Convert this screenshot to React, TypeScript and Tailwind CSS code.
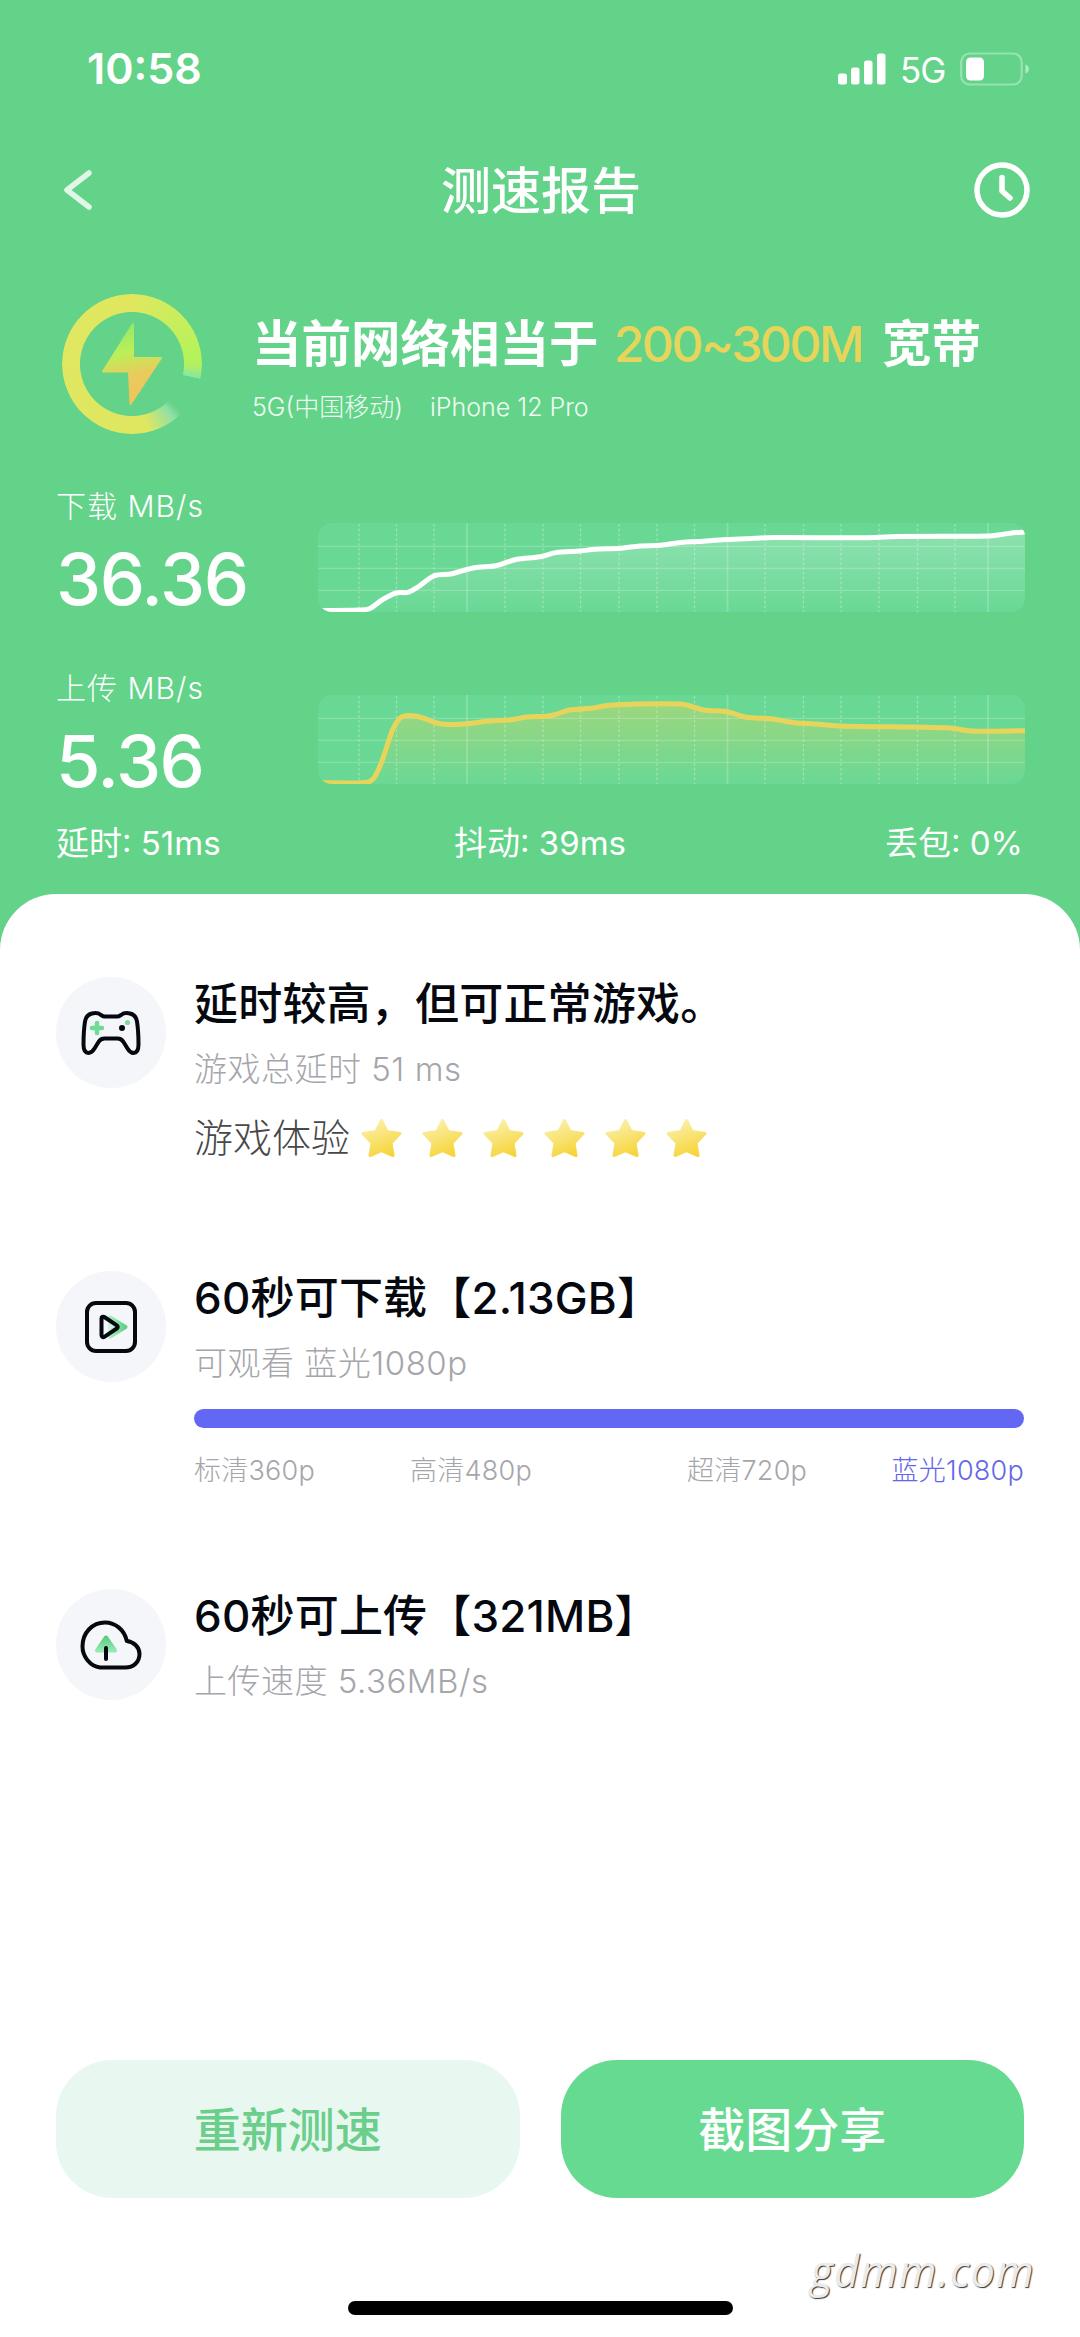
import type { ReactNode } from "react";

type Point = [number, number];

const downloadPoints: Point[] = [
  [2, 87.5], [40, 87], [52, 85.5], [64, 77], [78, 70], [90, 69.3], [100, 64], [116, 52.8],
  [133, 51], [149, 46.5], [160, 44.3], [178, 42.8], [198, 36.5], [222, 33.8], [237.5, 29.6],
  [262.5, 28], [277, 26.2], [303, 25.2], [322, 23], [342.5, 22.3], [363, 19.5], [380, 18.5],
  [408, 16.5], [428.5, 15.7], [456, 14.5], [542, 14.8], [580, 13.5], [669.5, 13],
  [683.5, 11.5], [697, 9.6], [708, 9],
];

const uploadPoints: Point[] = [
  [2, 87.5], [48, 87.5], [56, 83], [64, 66], [74.5, 35], [81.5, 23.5], [88, 20.7], [98.5, 21.3],
  [109, 24.5], [121, 28.5], [136.5, 29.5], [149, 28.8], [171, 26], [191.5, 25], [209, 22],
  [229, 21.2], [237.5, 19.5], [251, 15], [273.5, 13.3], [294, 10], [363, 9], [373.5, 11.3],
  [385.5, 15], [408, 16.5], [428.5, 22.3], [452.5, 23.8], [477, 27.7], [497, 28.9], [521.5, 31],
  [632, 33], [653, 36], [708, 35.7],
];

const dashedLines = [41, 78.5, 116, 187, 225, 262.5, 301, 339, 376.5, 447, 485.5, 523, 561, 599.5, 637];
const solidLines = [149, 409.5, 670];

function smoothPath(points: Point[]) {
  let d = `M${points[0][0]} ${points[0][1]}`;
  for (let i = 0; i < points.length - 1; i++) {
    const p0 = points[i - 1] || points[i];
    const p1 = points[i];
    const p2 = points[i + 1];
    const p3 = points[i + 2] || p2;
    const dx = (p2[0] - p1[0]) / 3;
    const m1 = (p2[1] - p0[1]) / (p2[0] - p0[0]);
    const m2 = (p3[1] - p1[1]) / (p3[0] - p1[0]);
    d += `C${p1[0] + dx} ${p1[1] + m1 * dx} ${p2[0] - dx} ${p2[1] - m2 * dx} ${p2[0]} ${p2[1]}`;
  }
  return d;
}

interface SpeedChartProps {
  id: string;
  points: Point[];
  color: string;
  fillOpacity: number;
}

function SpeedChart({ id, points, color, fillOpacity }: SpeedChartProps) {
  const line = smoothPath(points);
  return (
    <svg width="707" height="89" viewBox="0 0 707 89" className="rounded-[14px] bg-[#6ad895]">
      <defs>
        <linearGradient id={id} x1="0" y1="0" x2="0" y2="1">
          <stop offset="0" stopColor={color} stopOpacity={fillOpacity} />
          <stop offset="1" stopColor={color} stopOpacity="0" />
        </linearGradient>
      </defs>
      <path d={`${line}V89H2Z`} fill={`url(#${id})`} />
      <g stroke="#fff" strokeOpacity="0.2" strokeWidth="1.3">
        {[23.3, 45.3, 67.3].map((y) => (
          <path key={y} d={`M0 ${y}H707`} />
        ))}
        {solidLines.map((x) => (
          <path key={x} d={`M${x} 0V89`} strokeWidth="1.8" />
        ))}
        {dashedLines.map((x) => (
          <path key={x} d={`M${x} 1V89`} strokeOpacity="0.3" strokeDasharray="2.6 2.2" />
        ))}
      </g>
      <path d={line} fill="none" stroke={color} strokeWidth="5" />
    </svg>
  );
}

interface SpeedRowProps extends SpeedChartProps {
  label: string;
  value: string;
  chartClass: string;
}

function SpeedRow({ label, value, chartClass, ...chart }: SpeedRowProps) {
  return (
    <div className="flex justify-between">
      <div className="flex flex-col gap-[13px]">
        <div className="h-10 text-[30px] leading-10 font-light tracking-[1px] whitespace-nowrap">{label}</div>
        <div className="h-20 text-[72px] leading-[80px] font-medium tracking-[-1.4px]">{value}</div>
      </div>
      <div className={chartClass}>
        <SpeedChart {...chart} />
      </div>
    </div>
  );
}

interface ReportItemProps {
  icon: ReactNode;
  title: string;
  subtitle: string;
  children?: ReactNode;
}

function ReportItem({ icon, title, subtitle, children }: ReportItemProps) {
  return (
    <div className="flex gap-7">
      <div className="flex h-[111px] w-[110px] shrink-0 items-center justify-center rounded-full bg-[#f5f6f9]">
        {icon}
      </div>
      <div className="flex-1">
        <h2 className="h-[52px] text-[44px] leading-[54px] font-medium tracking-[0.2px] whitespace-nowrap text-[#05090f]">
          {title}
        </h2>
        <p className="mt-5 h-10 text-[33px] leading-10 font-light tracking-[0.5px] whitespace-nowrap text-[#a5a6ab]">
          {subtitle}
        </p>
        {children}
      </div>
    </div>
  );
}

function Star() {
  return (
    <svg width="41" height="40" viewBox="0 0 41 40">
      <defs>
        <linearGradient id="star" x1="0.2" y1="0" x2="0.6" y2="1">
          <stop offset="0" stopColor="#fbf1ae" />
          <stop offset="1" stopColor="#f6d53c" />
        </linearGradient>
      </defs>
      <path
        d="M20.5 2.5 26 13.5 39 15.5 30 25 32 37.5 20.5 32.5 9 37.5 11 25 2 15.5 15 13.5Z"
        fill="url(#star)"
        stroke="url(#star)"
        strokeWidth="3"
        strokeLinejoin="round"
      />
    </svg>
  );
}

function GamepadIcon() {
  return (
    <svg width="60" height="46" viewBox="0 0 60 46" fill="none">
      <path
        d="M11 3.500c3.500-.8 6.500-.5 9 1.500 1.500 1 2.500 1.500 4 1.500h12c1.500 0 2.500-.5 4-1.500 2.500-2 5.500-2.300 9-1.500 4.500 1 6.200 3.500 7 8 1 6.500 1.500 14 1.500 23 0 5-1.500 8.500-5 8.500-3 0-4.500-2-6-4.500l-4-6.500c-1.500-2.500-3.500-3.500-6-3.500h-13c-2.500 0-4.500 1-6 3.500l-4 6.500c-1.500 2.500-3 4.500-6 4.500-3.500 0-5-3.500-5-8.500 0-9 .5-16.500 1.500-23 .8-4.500 2.500-7 7-8Z"
        stroke="#05090f"
        strokeWidth="4"
        strokeLinejoin="round"
      />
      <path d="M16 13v10M11 18h10" stroke="#6fdb98" strokeWidth="4.500" strokeLinecap="round" />
      <circle cx="41" cy="18" r="3" fill="#05090f" />
      <circle cx="46.500" cy="12.500" r="2.600" fill="#7bdd9f" />
    </svg>
  );
}

function VideoIcon() {
  return (
    <svg width="54" height="54" viewBox="0 0 54 54" fill="none">
      <defs>
        <linearGradient id="play" x1="0" y1="0" x2="1" y2="0">
          <stop offset="0" stopColor="#a9ecc1" />
          <stop offset="1" stopColor="#5fd086" />
        </linearGradient>
      </defs>
      <rect x="3" y="3" width="48" height="48" rx="9" stroke="#05090f" strokeWidth="4" />
      <path d="M26 17.500 41.500 27 26 36.500Z" fill="url(#play)" stroke="url(#play)" strokeWidth="4" strokeLinejoin="round" />
      <path
        d="M17.500 18.500c0-1.500 1.500-2.300 2.800-1.500l12.500 8.300c1.200.8 1.200 2.400 0 3.200l-12.500 8.300c-1.300.8-2.800 0-2.800-1.500Z"
        fill="#f5f6f9"
        fillOpacity="0.5"
        stroke="#05090f"
        strokeWidth="4"
      />
    </svg>
  );
}

function CloudIcon() {
  return (
    <svg width="62" height="50" viewBox="0 0 62 50" fill="none">
      <defs>
        <linearGradient id="arrow" x1="0" y1="0" x2="0" y2="1">
          <stop offset="0" stopColor="#5ecb82" />
          <stop offset="1" stopColor="#92e9b2" />
        </linearGradient>
      </defs>
      <path
        d="M20 47.500C10 46 2.500 36.500 2.500 26.500 2.500 12.500 12.500 2.500 25 2.500c10.500 0 19.500 7.500 21.800 18.500C54 22 59.500 27 59.500 34c0 8-6 13.500-14 13.500Z"
        stroke="#05090f"
        strokeWidth="4"
        strokeLinejoin="round"
      />
      <path d="M26 17.500 35 30.500H17Z" fill="url(#arrow)" stroke="url(#arrow)" strokeWidth="4" strokeLinejoin="round" />
      <path d="M26 28v11" stroke="#05090f" strokeWidth="4" strokeLinecap="round" />
    </svg>
  );
}

function StatusBar() {
  return (
    <div className="flex h-[137px] items-center justify-between pr-[50px] pl-[87px]">
      <span className="text-[43px] leading-none font-semibold">10:58</span>
      <div className="flex items-center">
        <svg width="48" height="32" viewBox="0 0 48 32" fill="currentColor">
          <rect x="0" y="20.500" width="9" height="11" rx="2.500" />
          <rect x="13" y="14.500" width="8.500" height="17" rx="2.500" />
          <rect x="26" y="7.500" width="8.500" height="24" rx="2.500" />
          <rect x="39" y="0.500" width="8.500" height="31" rx="2.500" />
        </svg>
        <span className="mt-[3px] ml-3.5 w-[46px] text-[35px] leading-none tracking-[-1px]">5G</span>
        <svg className="ml-[14px]" width="70" height="34" viewBox="0 0 70 34">
          <rect x="1.200" y="1.500" width="60.500" height="31" rx="8.500" fill="none" stroke="#fff" strokeOpacity="0.35" strokeWidth="2.200" />
          <rect x="6" y="5.500" width="18" height="23" rx="4.500" fill="#fff" />
          <path d="M65.500 12.500c4.500 1.500 4.500 7.500 0 9Z" fill="#fff" fillOpacity="0.5" />
        </svg>
      </div>
    </div>
  );
}

const qualities = [
  { label: "标清360p", className: "w-[216px]" },
  { label: "高清480p", className: "w-[277px]" },
  { label: "超清720p", className: "flex-1" },
  { label: "蓝光1080p", className: "text-[#6467e8]" },
];

export default function App() {
  return (
    <div className="relative flex h-[2337px] w-[1080px] flex-col overflow-hidden bg-[#63d389] font-['Inter','Noto_Sans_CJK_SC',sans-serif] text-white">
      <StatusBar />

      <header className="flex h-[106px] items-center justify-between pr-[50px] pl-[62px]">
        <svg width="46" height="40" viewBox="0 0 46 40" fill="none">
          <path d="M27 3 5 20 27 37" stroke="#fff" strokeOpacity="0.8" strokeWidth="5.500" strokeLinecap="round" strokeLinejoin="round" />
        </svg>
        <h1 className="h-[60px] text-[50px] leading-[63px] font-medium">测速报告</h1>
        <svg width="56" height="56" viewBox="0 0 56 56" fill="none" stroke="#fff" strokeWidth="5.500">
          <circle cx="28" cy="28" r="25" />
          <path d="M28 15.500V29l8 7" strokeLinecap="round" strokeLinejoin="round" />
        </svg>
      </header>

      <section className="flex h-[243px] pt-[51px] pl-[62px]">
        <div className="flex h-[140px] w-[140px] items-center justify-center">
          <div className="h-[140px] w-[140px] rounded-full bg-[conic-gradient(from_90deg,#b3f25c_0deg,#a9ee70_4deg,#86e6a0_12deg,transparent_12.5deg,transparent_44deg,#8fe0a5_52deg,#dfe761_76deg,#e0e75f_270deg,#b6f35b_350deg,#b3f25c_360deg)] mask-[radial-gradient(circle,transparent_51.5px,#000_52.5px)]" />
          <svg className="absolute" width="64" height="84" viewBox="0 0 64 84">
            <defs>
              <linearGradient id="bolt" x1="0" y1="0" x2="0.150" y2="1">
                <stop offset="0" stopColor="#8fe66c" />
                <stop offset="0.4" stopColor="#baf058" />
                <stop offset="0.7" stopColor="#e9cb5c" />
                <stop offset="1" stopColor="#f0c45c" />
              </linearGradient>
            </defs>
            <path d="M33 2V36H61L30.500 82 29 49.500H3Z" fill="url(#bolt)" stroke="url(#bolt)" strokeWidth="2" strokeLinejoin="round" />
          </svg>
        </div>
        <div className="mt-[19px] ml-[50px]">
          <div className="flex h-[60px] text-[49.5px] leading-[62px] font-bold whitespace-nowrap">
            <span className="w-[362px]">当前网络相当于</span>
            <span className="w-[268px] text-[50px] font-medium tracking-[-2.7px] text-[#e9d45b]">200~300M</span>
            <span>宽带</span>
          </div>
          <div className="mt-[17px] flex h-8 gap-7 text-[25px] leading-[34px] font-light whitespace-nowrap text-white/90">
            <span className="w-[150px]">5G(中国移动)</span>
            <span>iPhone 12 Pro</span>
          </div>
        </div>
      </section>

      <section className="flex h-[408px] flex-col gap-[49px] pr-[55px] pl-[56px]">
        <SpeedRow label="下载 MB/s" value="36.36" chartClass="mt-[37px]" id="down" points={downloadPoints} color="#ffffff" fillOpacity={0.24} />
        <SpeedRow label="上传 MB/s" value="5.36" chartClass="mt-[27px]" id="up" points={uploadPoints} color="#e9d45b" fillOpacity={0.4} />
        <div className="mt-[-28px] flex h-10 text-[33px] leading-[42px] whitespace-nowrap">
          <span className="w-[398px]">延时: 51ms</span>
          <span className="w-[431px]">抖动: 39ms</span>
          <span>丢包: 0%</span>
        </div>
      </section>

      <main className="flex-1 rounded-t-[56px] bg-white px-14 pt-[83px]">
        <ReportItem icon={<GamepadIcon />} title="延时较高，但可正常游戏。" subtitle="游戏总延时 51 ms">
          <div className="mt-[27px] flex h-11 items-center text-[39px] leading-[44px] font-light text-[#484848]">
            <span className="w-[167px] whitespace-nowrap">游戏体验</span>
            <div className="flex gap-5">
              {[0, 1, 2, 3, 4, 5].map((n) => (
                <Star key={n} />
              ))}
            </div>
          </div>
        </ReportItem>

        <div className="mt-[111px]">
          <ReportItem icon={<VideoIcon />} title="60秒可下载【2.13GB】" subtitle="可观看 蓝光1080p">
            <div className="mt-[26px] h-[19px] rounded-full bg-[#6268f4]" />
            <div className="mt-[26px] flex h-8 text-[27px] leading-[34px] font-light tracking-[0.25px] whitespace-nowrap text-[#a5a6ab]">
              {qualities.map((q) => (
                <span key={q.label} className={q.className}>
                  {q.label}
                </span>
              ))}
            </div>
          </ReportItem>
        </div>

        <div className="mt-[103px]">
          <ReportItem icon={<CloudIcon />} title="60秒可上传【321MB】" subtitle="上传速度 5.36MB/s" />
        </div>

        <div className="mt-[359px] flex gap-[41px] text-[47px] leading-none font-medium">
          <button className="h-[138px] flex-1 rounded-[56px] bg-[#e8f8f0] text-[#6bce8b]">重新测速</button>
          <button className="h-[138px] flex-1 rounded-[56px] bg-[#67da92]">截图分享</button>
        </div>
        <div className="mx-auto mt-[103px] h-3.5 w-[385px] rounded-full bg-black" />
      </main>

      <span className="absolute right-[45px] bottom-[36px] font-['Open_Sans','Noto_Sans',sans-serif] text-[43px] leading-[60px] tracking-[1.3px] text-[#ebebeb] italic [text-shadow:1px_1px_1px_#333]">
        gdmm.com
      </span>
    </div>
  );
}
